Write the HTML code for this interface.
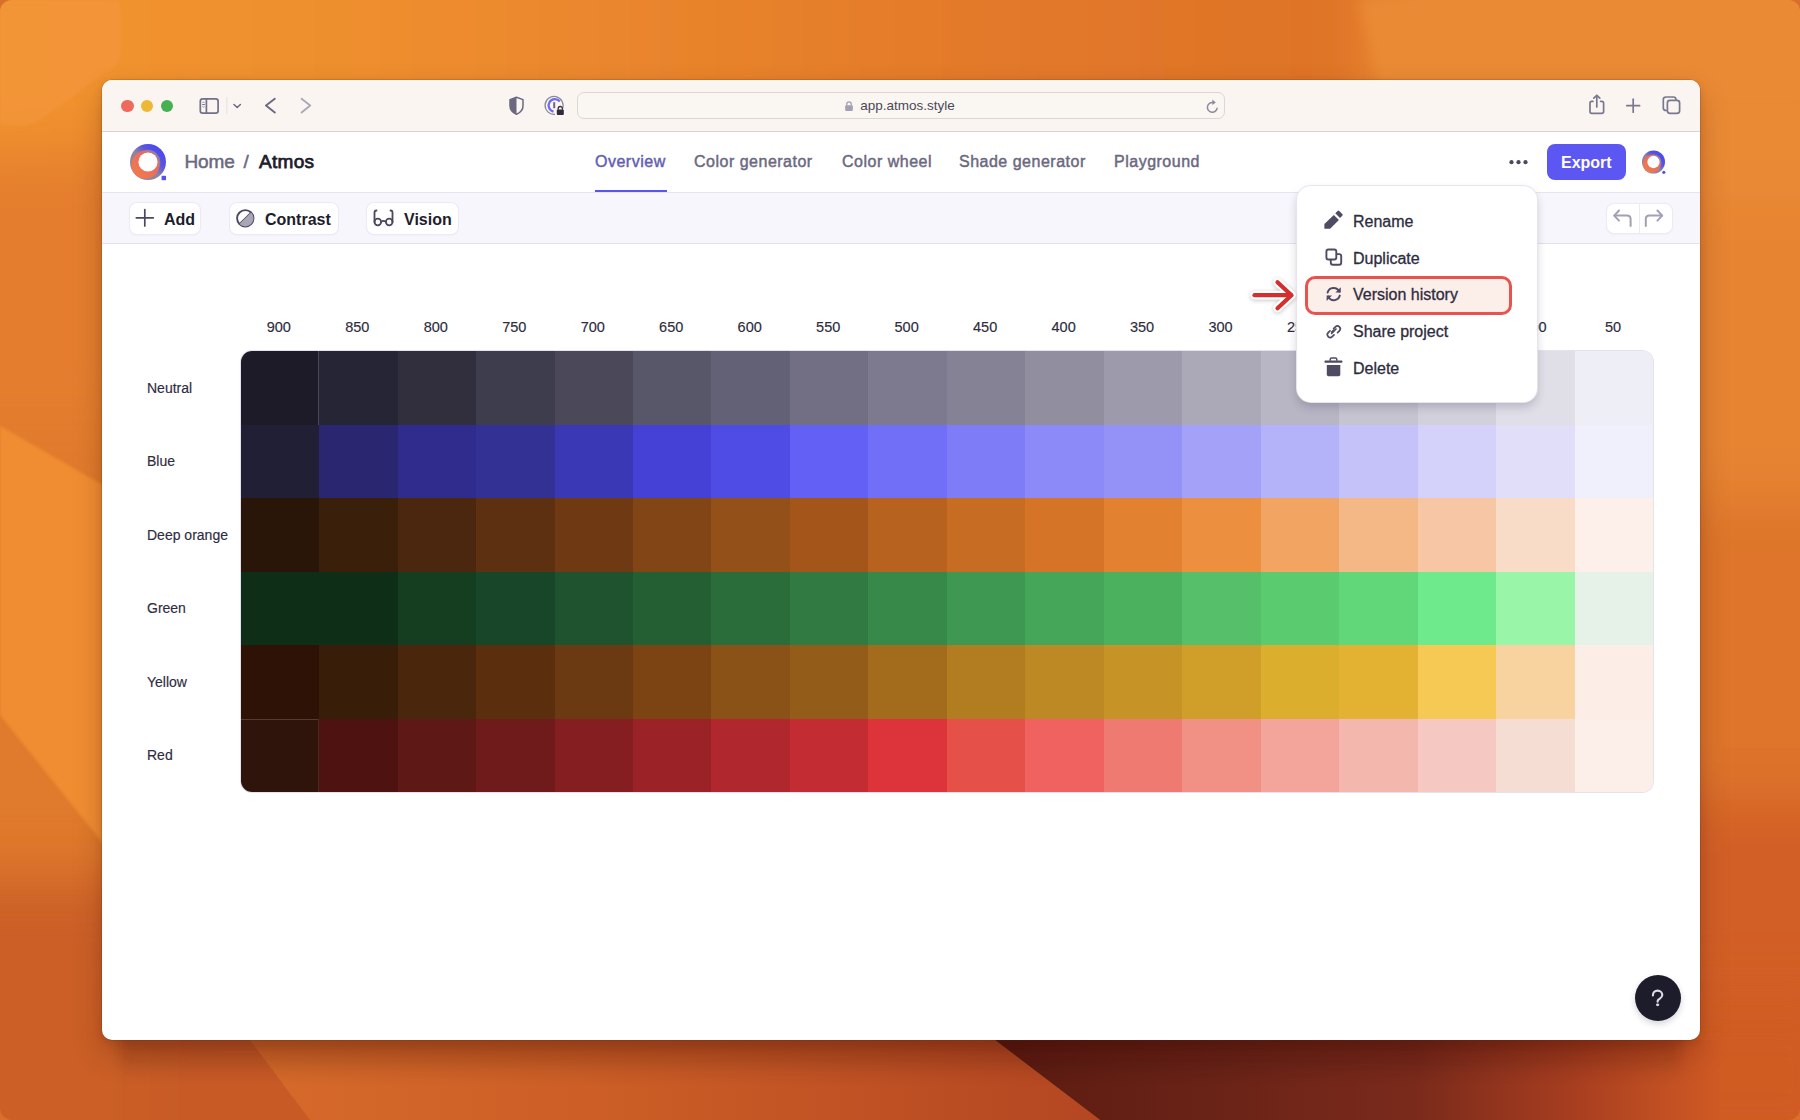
<!DOCTYPE html>
<html><head><meta charset="utf-8">
<style>
*{box-sizing:border-box;margin:0;padding:0}
html,body{width:1800px;height:1120px;overflow:hidden}
body{position:relative;font-family:"Liberation Sans",sans-serif;background:#DA6E2A}
.a{position:absolute}
#wall{position:absolute;left:0;top:0;width:1800px;height:1120px;border-radius:12px;overflow:hidden}
#win{position:absolute;left:102px;top:80px;width:1598px;height:960px;border-radius:10px;background:#fff;
 box-shadow:0 0 0 .5px rgba(90,40,10,.3),0 14px 30px rgba(50,10,0,.22),0 3px 8px rgba(50,10,0,.12)}
#tb{position:absolute;left:102px;top:80px;width:1598px;height:52px;background:#FAF5F1;border-bottom:1px solid #D9D3D1;border-radius:10px 10px 0 0}
.tl{position:absolute;top:99.5px;width:12.5px;height:12.5px;border-radius:50%}
#url{position:absolute;left:576.5px;top:92.3px;width:648px;height:27.2px;border:1.5px solid #DCD7D6;border-radius:7px;background:#FAF6F2}
#url .t{position:absolute;left:0;width:100%;top:4.5px;text-align:center;font-size:13.5px;color:#4A4858;padding-left:14px}
#hdr{position:absolute;left:102px;top:132px;width:1598px;height:60.5px;background:#fff;border-bottom:1px solid #E6E4F0}
.nav{position:absolute;top:152.7px;font-size:16px;color:#6B6880;letter-spacing:.5px;-webkit-text-stroke:.45px #6B6880}
#tool{position:absolute;left:102px;top:192.5px;width:1598px;height:51px;background:#F7F6FC;border-bottom:1px solid #E3E1EC}
.btn{position:absolute;top:202.5px;height:31.5px;background:#fff;border-radius:7px;box-shadow:0 0 0 1px #ECEAF5,0 1px 2px rgba(80,70,120,.10)}
.bt{position:absolute;top:211.2px;font-size:16px;font-weight:bold;color:#1E1D2B}
.colh{position:absolute;top:318.5px;width:60px;text-align:center;font-size:14.5px;color:#2E2C3E;-webkit-text-stroke:.15px #2E2C3E}
.rowl{position:absolute;left:147px;width:100px;font-size:14px;color:#2E2C3E;line-height:20px;-webkit-text-stroke:.15px #2E2C3E}
#grid{position:absolute;left:240.6px;top:351px;width:1412.6px;height:441px;border-radius:11px;overflow:hidden;box-shadow:0 0 0 1px #E4E2EE}
.cell{position:absolute;width:79.08px;height:74.10px}
#menu{position:absolute;left:1297px;top:186px;width:240px;height:216px;background:#fff;border-radius:14px;
 box-shadow:0 0 0 1px #E6E4EF,0 5px 10px rgba(40,35,70,.22)}
.mi{position:absolute;left:1353px;font-size:16px;color:#2E2C3E;-webkit-text-stroke:.3px #2E2C3E}
#hl{position:absolute;left:1305px;top:275.5px;width:207px;height:39px;border:3px solid #E8534E;border-radius:10px;background:#FCEFEA}
#help{position:absolute;left:1635px;top:975px;width:46px;height:46px;border-radius:50%;background:#1D1C2A;box-shadow:0 3px 6px rgba(30,30,60,.18)}
svg{position:absolute;left:0;top:0;overflow:visible}
</style></head>
<body>
<div id="wall">
<svg width="1800" height="1120" viewBox="0 0 1800 1120">
<defs>
<filter id="bl" filterUnits="userSpaceOnUse" x="-300" y="-300" width="2400" height="1720"><feGaussianBlur stdDeviation="30"/></filter>
<filter id="bl3" filterUnits="userSpaceOnUse" x="-300" y="-300" width="2400" height="1720"><feGaussianBlur stdDeviation="1.5"/></filter>
<filter id="bl2" filterUnits="userSpaceOnUse" x="-300" y="-300" width="2400" height="1720"><feGaussianBlur stdDeviation="6"/></filter>
<linearGradient id="gtop2" gradientUnits="userSpaceOnUse" x1="0" y1="0" x2="1370" y2="0"><stop offset="0" stop-color="#F1932F"/><stop offset=".22" stop-color="#EF902F"/><stop offset=".45" stop-color="#EA862D"/><stop offset=".7" stop-color="#E37A2A"/><stop offset="1" stop-color="#DE7227"/></linearGradient>
<linearGradient id="gmid" gradientUnits="userSpaceOnUse" x1="250" y1="0" x2="1100" y2="0"><stop offset="0" stop-color="#D66A2A"/><stop offset=".4" stop-color="#CC5E26"/><stop offset="1" stop-color="#B44622"/></linearGradient>
<linearGradient id="shb" x1="0" y1="0" x2="0" y2="1">
<stop offset="0" stop-color="#2A0800" stop-opacity=".22"/><stop offset=".5" stop-color="#2A0800" stop-opacity=".08"/><stop offset="1" stop-color="#2A0800" stop-opacity="0"/></linearGradient>
<linearGradient id="gdark" x1="0" y1="0" x2="1" y2="0">
<stop offset="0" stop-color="#5C1B11"/><stop offset=".3" stop-color="#6A2317"/><stop offset=".58" stop-color="#7A2A1B"/><stop offset=".8" stop-color="#A83E20"/><stop offset="1" stop-color="#D05A24"/></linearGradient>
</defs>
<rect width="1800" height="1120" fill="#E07A2C"/>
<g filter="url(#bl)">
 <rect x="-100" y="-100" width="1470" height="300" fill="url(#gtop2)"/>
 <rect x="1370" y="-100" width="530" height="300" fill="#EA8A34"/>
 <rect x="-100" y="150" width="250" height="280" fill="#E47E2D"/>
 <rect x="1650" y="200" width="250" height="300" fill="#E68430"/>
 <rect x="1650" y="500" width="250" height="300" fill="#DE742C"/>
 <rect x="1650" y="800" width="250" height="400" fill="#D25E25"/>
 <rect x="-100" y="880" width="250" height="400" fill="#CB5E26"/>
 <rect x="150" y="1000" width="850" height="200" fill="#C85A26"/>
</g>
<polygon points="0,426 150,512 150,902 0,715" fill="#F08D30" filter="url(#bl3)"/>
<polygon points="1360,0 1800,0 1800,90 1380,90" fill="#EA8A34" filter="url(#bl2)"/>
<polygon points="250,1040 995,1040 1100,1120 310,1120" fill="url(#gmid)"/>
<rect x="1450" y="1000" width="400" height="150" fill="#D05C24" filter="url(#bl)"/>
<polygon points="995,1040 1720,1040 1720,1120 1100,1120" fill="url(#gdark)"/>
<path d="M0,0 H112 Q121,0 121,10 V52 Q121,62 112,69 L40,120 Q30,127 18,125 H0 Z" fill="#F3963C" opacity=".7" filter="url(#bl3)"/>
<rect x="120" y="1038" width="1560" height="42" fill="url(#shb)" filter="url(#bl2)"/>
</svg>
</div>

<div id="win"></div>
<div id="tb"></div>
<div class="tl" style="left:121px;background:#EE6A5E"></div>
<div class="tl" style="left:140.9px;background:#EDB835"></div>
<div class="tl" style="left:160.9px;background:#46B052"></div>
<div id="url"><div class="t">app.atmos.style</div></div>
<div id="hdr"></div>
<div id="tool"></div>

<!-- title bar icons -->
<svg width="1800" height="1120">
 <g fill="none" stroke="#6B6880" stroke-width="1.7" stroke-linecap="round" stroke-linejoin="round">
  <rect x="200.3" y="98.8" width="17.8" height="14.3" rx="2.4" stroke="#72708A"/>
  <line x1="206.4" y1="98.8" x2="206.4" y2="113.1" stroke="#72708A"/>
  <line x1="202.6" y1="104.5" x2="204.4" y2="104.5" stroke-width="1" stroke="#72708A"/>
  <polyline points="202.8,102.6 203.5,101.8 204.2,102.6" stroke-width=".9" stroke="#8A88A0"/>
  <polyline points="202.8,106.6 203.5,107.4 204.2,106.6" stroke-width=".9" stroke="#8A88A0"/>
  <polyline points="234,104.5 237.2,107.5 240.4,104.5" stroke-width="1.5"/>
  <polyline points="274.8,98.8 266,105.6 274.8,112.6" stroke-width="1.9"/>
  <polyline points="301.6,98.8 310.2,105.6 301.6,112.6" stroke="#ABA8BA" stroke-width="1.9"/>
 </g>
 <line x1="226.8" y1="97" x2="226.8" y2="114" stroke="#E6E0E0" stroke-width="1"/>
 <!-- shield -->
 <path d="M516.5,97.3 L523,99.6 L523,105.8 Q523,111.6 516.5,114.3 Q510,111.6 510,105.8 L510,99.6 Z" fill="none" stroke="#6B6880" stroke-width="1.5" stroke-linejoin="round"/>
 <path d="M516.5,97.3 L510,99.6 L510,105.8 Q510,111.6 516.5,114.3 Z" fill="#6B6880"/>
 <!-- privacy -->
 <path d="M562.5,108.5 A9,9 0 1 0 555,114.3" fill="none" stroke="#8C8A9A" stroke-width="1.3"/>
 <path d="M559.8,101.5 A6.3,6.3 0 1 0 553.5,111.6" fill="none" stroke="#6E6CF0" stroke-width="2.3"/>
 <rect x="553.2" y="102.2" width="2" height="6" fill="#6B6880"/>
 <rect x="556.8" y="109.6" width="7" height="5.3" rx="1" fill="#2E2C3A"/>
 <path d="M558.2,109.8 V108.6 A2.1,2.1 0 0 1 562.4,108.6 V109.8" fill="none" stroke="#2E2C3A" stroke-width="1.3"/>
 <!-- url lock -->
 <rect x="845.2" y="105.2" width="7.6" height="5.8" rx="1" fill="#A3A0B2"/>
 <path d="M846.8,105.5 V104 A2.2,2.2 0 0 1 851.2,104 V105.5" fill="none" stroke="#A3A0B2" stroke-width="1.3"/>
 <!-- reload -->
 <path d="M1217.2,107.8 A4.9,4.9 0 1 1 1213.2,102.6" fill="none" stroke="#8C8A9C" stroke-width="1.5"/>
 <path d="M1212.4,99.6 L1215.8,102.4 L1212.4,105 Z" fill="#8C8A9C"/>
 <!-- share/plus/tabs -->
 <g fill="none" stroke="#7A7790" stroke-width="1.7" stroke-linecap="round" stroke-linejoin="round">
  <path d="M1593,101.3 H1591.8 Q1590,101.3 1590,103.2 V111.5 Q1590,113.4 1591.8,113.4 H1601.8 Q1603.6,113.4 1603.6,111.5 V103.2 Q1603.6,101.3 1601.8,101.3 H1600.6"/>
  <line x1="1596.8" y1="95.5" x2="1596.8" y2="107"/>
  <polyline points="1593.8,98.2 1596.8,95.3 1599.8,98.2"/>
  <line x1="1626.8" y1="105.7" x2="1639.6" y2="105.7"/>
  <line x1="1633.2" y1="99.2" x2="1633.2" y2="112.2"/>
  <path d="M1666.3,110.5 Q1663.3,110.5 1663.3,108 V99.6 Q1663.3,97 1666,97 H1673.4 Q1675.8,97 1676,99.4"/>
  <rect x="1667.4" y="100.4" width="12.2" height="13" rx="2.6"/>
 </g>
</svg>

<!-- header -->
<svg width="1800" height="1120">
 <defs>
  <linearGradient id="lg" x1="1" y1="0" x2="0" y2="1">
   <stop offset="0" stop-color="#4F4CF0"/><stop offset=".42" stop-color="#5A56EA"/><stop offset=".58" stop-color="#8C84A2"/><stop offset=".76" stop-color="#F06A58"/><stop offset="1" stop-color="#F28040"/></linearGradient>
 </defs>
 <defs><linearGradient id="lgb" gradientUnits="userSpaceOnUse" x1="160" y1="150" x2="136" y2="174"><stop offset="0" stop-color="#4C48F2"/><stop offset=".3" stop-color="#5A55E0"/><stop offset=".55" stop-color="#8A84A2"/><stop offset="1" stop-color="#8E86A0"/></linearGradient>
 <linearGradient id="lgo" gradientUnits="userSpaceOnUse" x1="155" y1="155" x2="136" y2="176"><stop offset="0" stop-color="#E06A66"/><stop offset=".5" stop-color="#EE6E5A"/><stop offset="1" stop-color="#F07C4C"/></linearGradient>
 <mask id="hole"><rect x="0" y="0" width="1800" height="1120" fill="#fff"/><circle cx="148" cy="162" r="9.6" fill="#000"/></mask>
 <g id="logo"><g mask="url(#hole)">
  <circle cx="148" cy="162" r="18" fill="url(#lgb)"/>
  <circle cx="147.6" cy="162.4" r="12.7" fill="#8A84A2"/>
  <circle cx="145.3" cy="164.8" r="14" fill="url(#lgo)"/>
 </g></g></defs>
 <use href="#logo"/>
 <rect x="161.6" y="175.8" width="4.4" height="4.4" fill="#5550F5"/>
 <use href="#logo" transform="translate(1653.5,162) scale(.64) translate(-148,-162)"/>
 <circle cx="1663.8" cy="172.3" r="1.6" fill="#5550F5"/>
 <circle cx="1511.5" cy="162.2" r="2.1" fill="#4C4A60"/>
 <circle cx="1518.5" cy="162.2" r="2.1" fill="#4C4A60"/>
 <circle cx="1525.5" cy="162.2" r="2.1" fill="#4C4A60"/>
</svg>
<div class="a" style="left:184.5px;top:151px;font-size:19px;color:#6B6880;letter-spacing:-.1px;-webkit-text-stroke:.5px #6B6880">Home</div>
<div class="a" style="left:243.5px;top:151px;font-size:19px;color:#6B6880;-webkit-text-stroke:.5px #6B6880">/</div>
<div class="a" style="left:259px;top:151px;font-size:19px;color:#1E1D2B;letter-spacing:.3px;-webkit-text-stroke:.75px #1E1D2B">Atmos</div>
<div class="nav" style="left:595px;color:#5A55EE">Overview</div>
<div class="a" style="left:594.5px;top:189.5px;width:72px;height:2.5px;background:#5A55EE"></div>
<div class="nav" style="left:694px">Color generator</div>
<div class="nav" style="left:842px">Color wheel</div>
<div class="nav" style="left:959px">Shade generator</div>
<div class="nav" style="left:1114px">Playground</div>
<div class="a" style="left:1546.5px;top:144px;width:79px;height:35.7px;background:#5C57F2;border-radius:8px"></div>
<div class="a" style="left:1561px;top:154.3px;font-size:16px;font-weight:bold;color:#fff">Export</div>

<!-- toolbar -->
<div class="btn" style="left:130px;width:70px"></div>
<div class="btn" style="left:230px;width:108px"></div>
<div class="btn" style="left:367px;width:91px"></div>
<div class="btn" style="left:1606.5px;top:204px;width:65px;height:28.5px"></div>
<div class="a" style="left:1639px;top:204px;width:1px;height:28.5px;background:#ECEAF5"></div>
<div class="bt" style="left:164px">Add</div>
<div class="bt" style="left:265px">Contrast</div>
<div class="bt" style="left:404px">Vision</div>
<svg width="1800" height="1120">
 <g fill="none" stroke="#4A4860" stroke-width="1.7" stroke-linecap="round" stroke-linejoin="round">
  <line x1="136.3" y1="217.8" x2="153.3" y2="217.8"/>
  <line x1="144.8" y1="209.5" x2="144.8" y2="226"/>
  <circle cx="245.3" cy="218.3" r="8.2" stroke-width="1.9"/>
  <line x1="251.1" y1="212.5" x2="239.5" y2="224.1" stroke-width="1.6"/>
  <circle cx="377.8" cy="222" r="3.3" stroke-width="1.8"/>
  <circle cx="389.2" cy="222" r="3.3" stroke-width="1.8"/>
  <path d="M374.5,222 V212.5 Q374.5,210.5 376.5,210.5" stroke-width="1.8"/>
  <path d="M392.5,222 V212.5 Q392.5,210.5 390.5,210.5" stroke-width="1.8"/>
  <path d="M381.1,222 Q383.5,219.8 385.9,222" stroke-width="1.5"/>
 </g>
 <path d="M251.1,212.5 A8.2,8.2 0 0 1 239.5,224.1 Z" fill="#A9A6B8"/>
 <g fill="none" stroke="#A3A0B2" stroke-width="2" stroke-linecap="round" stroke-linejoin="round">
  <polyline points="1619,210.5 1614.2,215.6 1619,220.6"/>
  <path d="M1614.5,215.6 H1627 Q1630.6,215.6 1630.6,219.2 V226"/>
  <polyline points="1657.4,210.5 1662.2,215.6 1657.4,220.6"/>
  <path d="M1661.9,215.6 H1649.4 Q1645.8,215.6 1645.8,219.2 V226"/>
 </g>
</svg>

<div class="colh" style="left:248.84px">900</div>
<div class="colh" style="left:327.32px">850</div>
<div class="colh" style="left:405.79px">800</div>
<div class="colh" style="left:484.27px">750</div>
<div class="colh" style="left:562.75px">700</div>
<div class="colh" style="left:641.23px">650</div>
<div class="colh" style="left:719.71px">600</div>
<div class="colh" style="left:798.18px">550</div>
<div class="colh" style="left:876.66px">500</div>
<div class="colh" style="left:955.14px">450</div>
<div class="colh" style="left:1033.62px">400</div>
<div class="colh" style="left:1112.09px">350</div>
<div class="colh" style="left:1190.57px">300</div>
<div class="colh" style="left:1269.05px">250</div>
<div class="colh" style="left:1347.53px">200</div>
<div class="colh" style="left:1426.01px">150</div>
<div class="colh" style="left:1504.48px">100</div>
<div class="colh" style="left:1582.96px">50</div>
<div class="rowl" style="top:377.75px">Neutral</div>
<div class="rowl" style="top:451.25px">Blue</div>
<div class="rowl" style="top:524.75px">Deep orange</div>
<div class="rowl" style="top:598.25px">Green</div>
<div class="rowl" style="top:671.75px">Yellow</div>
<div class="rowl" style="top:745.25px">Red</div>
<div id="grid"><div class="cell" style="left:0.00px;top:0.00px;background:#1D1B27"></div>
<div class="cell" style="left:78.48px;top:0.00px;background:#262536"></div>
<div class="cell" style="left:156.96px;top:0.00px;background:#312F3E"></div>
<div class="cell" style="left:235.43px;top:0.00px;background:#3E3D4D"></div>
<div class="cell" style="left:313.91px;top:0.00px;background:#4B4959"></div>
<div class="cell" style="left:392.39px;top:0.00px;background:#585669"></div>
<div class="cell" style="left:470.87px;top:0.00px;background:#636176"></div>
<div class="cell" style="left:549.34px;top:0.00px;background:#726F84"></div>
<div class="cell" style="left:627.82px;top:0.00px;background:#7D7A8F"></div>
<div class="cell" style="left:706.30px;top:0.00px;background:#868296"></div>
<div class="cell" style="left:784.78px;top:0.00px;background:#908E9F"></div>
<div class="cell" style="left:863.26px;top:0.00px;background:#9D9AAB"></div>
<div class="cell" style="left:941.73px;top:0.00px;background:#ABA9B8"></div>
<div class="cell" style="left:1020.21px;top:0.00px;background:#B8B6C4"></div>
<div class="cell" style="left:1098.69px;top:0.00px;background:#C6C4D0"></div>
<div class="cell" style="left:1177.17px;top:0.00px;background:#D2D0DB"></div>
<div class="cell" style="left:1255.64px;top:0.00px;background:#E0DFE8"></div>
<div class="cell" style="left:1334.12px;top:0.00px;background:#EEEEF6"></div>
<div class="cell" style="left:0.00px;top:73.50px;background:#211F36"></div>
<div class="cell" style="left:78.48px;top:73.50px;background:#2A2770"></div>
<div class="cell" style="left:156.96px;top:73.50px;background:#2F2C8E"></div>
<div class="cell" style="left:235.43px;top:73.50px;background:#343194"></div>
<div class="cell" style="left:313.91px;top:73.50px;background:#3A38B5"></div>
<div class="cell" style="left:392.39px;top:73.50px;background:#4541D6"></div>
<div class="cell" style="left:470.87px;top:73.50px;background:#4F4CE6"></div>
<div class="cell" style="left:549.34px;top:73.50px;background:#6360F5"></div>
<div class="cell" style="left:627.82px;top:73.50px;background:#716EF8"></div>
<div class="cell" style="left:706.30px;top:73.50px;background:#7F7CF8"></div>
<div class="cell" style="left:784.78px;top:73.50px;background:#8C8AF8"></div>
<div class="cell" style="left:863.26px;top:73.50px;background:#9592F7"></div>
<div class="cell" style="left:941.73px;top:73.50px;background:#A4A2F8"></div>
<div class="cell" style="left:1020.21px;top:73.50px;background:#B4B2F8"></div>
<div class="cell" style="left:1098.69px;top:73.50px;background:#C4C2F9"></div>
<div class="cell" style="left:1177.17px;top:73.50px;background:#D4D2FA"></div>
<div class="cell" style="left:1255.64px;top:73.50px;background:#E0DEF9"></div>
<div class="cell" style="left:1334.12px;top:73.50px;background:#F0EFFC"></div>
<div class="cell" style="left:0.00px;top:147.00px;background:#2A1509"></div>
<div class="cell" style="left:78.48px;top:147.00px;background:#3A1F0A"></div>
<div class="cell" style="left:156.96px;top:147.00px;background:#4A270E"></div>
<div class="cell" style="left:235.43px;top:147.00px;background:#5C3010"></div>
<div class="cell" style="left:313.91px;top:147.00px;background:#6F3A13"></div>
<div class="cell" style="left:392.39px;top:147.00px;background:#824616"></div>
<div class="cell" style="left:470.87px;top:147.00px;background:#935019"></div>
<div class="cell" style="left:549.34px;top:147.00px;background:#A4561A"></div>
<div class="cell" style="left:627.82px;top:147.00px;background:#B8621F"></div>
<div class="cell" style="left:706.30px;top:147.00px;background:#C76C23"></div>
<div class="cell" style="left:784.78px;top:147.00px;background:#D57426"></div>
<div class="cell" style="left:863.26px;top:147.00px;background:#E28130"></div>
<div class="cell" style="left:941.73px;top:147.00px;background:#EC8F3E"></div>
<div class="cell" style="left:1020.21px;top:147.00px;background:#F2A462"></div>
<div class="cell" style="left:1098.69px;top:147.00px;background:#F4B886"></div>
<div class="cell" style="left:1177.17px;top:147.00px;background:#F6C6A5"></div>
<div class="cell" style="left:1255.64px;top:147.00px;background:#F8DCC8"></div>
<div class="cell" style="left:1334.12px;top:147.00px;background:#FDF0EA"></div>
<div class="cell" style="left:0.00px;top:220.50px;background:#0F2E17"></div>
<div class="cell" style="left:78.48px;top:220.50px;background:#0F2E17"></div>
<div class="cell" style="left:156.96px;top:220.50px;background:#153D20"></div>
<div class="cell" style="left:235.43px;top:220.50px;background:#184628"></div>
<div class="cell" style="left:313.91px;top:220.50px;background:#1F522E"></div>
<div class="cell" style="left:392.39px;top:220.50px;background:#245F33"></div>
<div class="cell" style="left:470.87px;top:220.50px;background:#2A6D3B"></div>
<div class="cell" style="left:549.34px;top:220.50px;background:#317B43"></div>
<div class="cell" style="left:627.82px;top:220.50px;background:#37894A"></div>
<div class="cell" style="left:706.30px;top:220.50px;background:#3E9851"></div>
<div class="cell" style="left:784.78px;top:220.50px;background:#45A558"></div>
<div class="cell" style="left:863.26px;top:220.50px;background:#4CB15F"></div>
<div class="cell" style="left:941.73px;top:220.50px;background:#55BF6A"></div>
<div class="cell" style="left:1020.21px;top:220.50px;background:#5BCB70"></div>
<div class="cell" style="left:1098.69px;top:220.50px;background:#62D77A"></div>
<div class="cell" style="left:1177.17px;top:220.50px;background:#6EE98B"></div>
<div class="cell" style="left:1255.64px;top:220.50px;background:#99F5A8"></div>
<div class="cell" style="left:1334.12px;top:220.50px;background:#E6F2E8"></div>
<div class="cell" style="left:0.00px;top:294.00px;background:#2E1206"></div>
<div class="cell" style="left:78.48px;top:294.00px;background:#381D08"></div>
<div class="cell" style="left:156.96px;top:294.00px;background:#4A260C"></div>
<div class="cell" style="left:235.43px;top:294.00px;background:#5B2F0E"></div>
<div class="cell" style="left:313.91px;top:294.00px;background:#6C3A12"></div>
<div class="cell" style="left:392.39px;top:294.00px;background:#7C4313"></div>
<div class="cell" style="left:470.87px;top:294.00px;background:#8A5216"></div>
<div class="cell" style="left:549.34px;top:294.00px;background:#935C18"></div>
<div class="cell" style="left:627.82px;top:294.00px;background:#A36C1C"></div>
<div class="cell" style="left:706.30px;top:294.00px;background:#B27D21"></div>
<div class="cell" style="left:784.78px;top:294.00px;background:#BC8924"></div>
<div class="cell" style="left:863.26px;top:294.00px;background:#C69426"></div>
<div class="cell" style="left:941.73px;top:294.00px;background:#D09F2A"></div>
<div class="cell" style="left:1020.21px;top:294.00px;background:#DCAE2E"></div>
<div class="cell" style="left:1098.69px;top:294.00px;background:#E3B232"></div>
<div class="cell" style="left:1177.17px;top:294.00px;background:#F6C955"></div>
<div class="cell" style="left:1255.64px;top:294.00px;background:#F8D3A0"></div>
<div class="cell" style="left:1334.12px;top:294.00px;background:#FCEEE6"></div>
<div class="cell" style="left:0.00px;top:367.50px;background:#2E140A"></div>
<div class="cell" style="left:78.48px;top:367.50px;background:#4E1210"></div>
<div class="cell" style="left:156.96px;top:367.50px;background:#5E1816"></div>
<div class="cell" style="left:235.43px;top:367.50px;background:#6F1A1B"></div>
<div class="cell" style="left:313.91px;top:367.50px;background:#851E20"></div>
<div class="cell" style="left:392.39px;top:367.50px;background:#9B2226"></div>
<div class="cell" style="left:470.87px;top:367.50px;background:#B0282E"></div>
<div class="cell" style="left:549.34px;top:367.50px;background:#C32C33"></div>
<div class="cell" style="left:627.82px;top:367.50px;background:#DC343A"></div>
<div class="cell" style="left:706.30px;top:367.50px;background:#E55048"></div>
<div class="cell" style="left:784.78px;top:367.50px;background:#EF6260"></div>
<div class="cell" style="left:863.26px;top:367.50px;background:#EF7A72"></div>
<div class="cell" style="left:941.73px;top:367.50px;background:#F19084"></div>
<div class="cell" style="left:1020.21px;top:367.50px;background:#F3A49B"></div>
<div class="cell" style="left:1098.69px;top:367.50px;background:#F4B7AE"></div>
<div class="cell" style="left:1177.17px;top:367.50px;background:#F6C8C2"></div>
<div class="cell" style="left:1255.64px;top:367.50px;background:#F6DDD3"></div>
<div class="cell" style="left:1334.12px;top:367.50px;background:#FCEEE9"></div>
<div class="cell" style="left:77.68px;top:0;width:1.2px;height:73.50px;background:#4A4858"></div>
<div class="cell" style="left:0;top:367.50px;width:78.48px;height:1px;background:#5A3A2E"></div>
<div class="cell" style="left:77.48px;top:367.50px;width:1px;height:73.50px;background:#4A2A1E"></div></div>

<div id="menu"></div>
<div id="hl"></div>
<div class="mi" style="top:213.4px">Rename</div>
<div class="mi" style="top:250.2px">Duplicate</div>
<div class="mi" style="top:286.2px">Version history</div>
<div class="mi" style="top:322.9px">Share project</div>
<div class="mi" style="top:360.4px">Delete</div>
<svg width="1800" height="1120">
 <!-- pencil -->
 <path d="M1324.4,228.8 V223.9 L1333.8,214.9 L1338.9,220 L1330.1,228.8 Z" fill="#4E4B63"/>
 <path d="M1335.3,213.3 L1337.6,211 Q1338.4,210.2 1339.2,211 L1342.3,214.1 Q1343.1,214.9 1342.3,215.7 L1340,218 Z" fill="#4E4B63"/>
 <!-- duplicate -->
 <g fill="none" stroke="#4E4B63" stroke-width="1.9" stroke-linejoin="round">
  <rect x="1326.4" y="249.5" width="9.9" height="10" rx="2"/>
  <path d="M1336.3,254.1 H1339.2 Q1341.2,254.1 1341.2,256.1 V262.8 Q1341.2,264.8 1339.2,264.8 H1332.8 Q1330.8,264.8 1330.8,262.8 V259.5"/>
 </g>
 <!-- refresh -->
 <g fill="none" stroke="#4E4B63" stroke-width="2" stroke-linecap="round">
  <path d="M1339.2,291.6 A6.2,6.2 0 0 0 1327.6,292.6"/>
  <path d="M1328.2,296.6 A6.2,6.2 0 0 0 1339.8,295.6"/>
 </g>
 <path d="M1340.8,287.2 V292.6 H1335.4 Z" fill="#4E4B63"/>
 <path d="M1326.6,301 V295.6 H1332 Z" fill="#4E4B63"/>
 <!-- link -->
 <g fill="none" stroke="#4E4B63" stroke-width="1.7" stroke-linecap="round">
  <path d="M1333.6,328.6 L1335.4,326.8 Q1337.4,324.8 1339.4,326.8 Q1341.4,328.8 1339.4,330.8 L1337.6,332.6"/>
  <path d="M1334,330.4 L1332.2,332.2" />
  <path d="M1333.6,330.4 L1331.8,332.2"/>
  <path d="M1337.6,332.6" />
  <path d="M1334,334.8 L1332.2,336.6 Q1330.2,338.6 1328.2,336.6 Q1326.2,334.6 1328.2,332.6 L1330,330.8"/>
  <line x1="1331.6" y1="333.4" x2="1336" y2="329"/>
 </g>
 <!-- trash -->
 <path d="M1326.8,365 H1340.3 V374.6 Q1340.3,376.3 1338.6,376.3 H1328.5 Q1326.8,376.3 1326.8,374.6 Z" fill="#4E4B63"/>
 <rect x="1324.4" y="360.6" width="18.1" height="2.2" rx="1" fill="#4E4B63"/>
 <path d="M1330.2,360.8 V359.4 Q1330.2,358 1331.6,358 H1335.4 Q1336.8,358 1336.8,359.4 V360.8" fill="none" stroke="#4E4B63" stroke-width="1.5"/>
 <!-- red arrow -->
 <g fill="none" stroke-linecap="round" stroke-linejoin="round">
  <g stroke="#fff" stroke-width="8.5" opacity=".9" style="filter:drop-shadow(0 1px 2px rgba(0,0,0,.25))">
   <line x1="1254.5" y1="295.2" x2="1291" y2="295.2"/>
   <polyline points="1277.5,282.2 1291.5,295.2 1277.5,308.2"/>
  </g>
  <g stroke="#D42E2E" stroke-width="4.2">
   <line x1="1254.5" y1="295.2" x2="1291" y2="295.2"/>
   <polyline points="1277.5,282.2 1291.5,295.2 1277.5,308.2"/>
  </g>
 </g>
</svg>
<div id="help"></div>
<svg width="1800" height="1120"><path d="M1652.9,995.4 C1652.9,992.4 1655,990.6 1657.6,990.6 C1660.3,990.6 1662.3,992.6 1662.3,995 C1662.3,997.6 1659.8,998.4 1658.4,999.6 C1657.8,1000.1 1657.6,1000.8 1657.6,1001.8" fill="none" stroke="#DCDAE4" stroke-width="2.1" stroke-linecap="round"/><ellipse cx="1657.6" cy="1004.8" rx="1.6" ry="1.4" fill="#DCDAE4"/></svg>
</body></html>
